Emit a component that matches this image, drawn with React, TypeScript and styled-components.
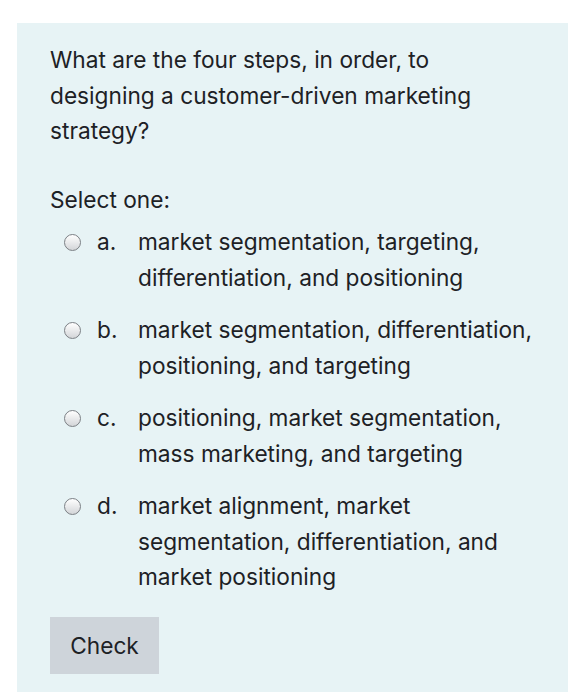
import React from 'react';
import styled, { createGlobalStyle } from 'styled-components';

const GlobalStyle = createGlobalStyle`
  html, body {
    margin: 0;
    padding: 0;
    background: #ffffff;
  }
  body {
    font-family: Inter, "Liberation Sans", sans-serif;
    color: #1d2125;
  }
`;

const Page = styled.div`
  padding: 23px 5px 6px 17px;
`;

const Panel = styled.div`
  background-color: #e7f3f5;
  padding: 19px 28px 18px 33px;
  font-size: 22.7px;
  line-height: 35.5px;
`;

const Question = styled.div`
  margin-bottom: 33.5px;
`;

const Prompt = styled.div`
  margin-bottom: 6.5px;
`;

const Answers = styled.div`
  display: flex;
  flex-direction: column;
  gap: 17px;
  padding-left: 13.5px;
`;

const Option = styled.label`
  display: flex;
  align-items: flex-start;
`;

const Radio = styled.span`
  flex: none;
  width: 17px;
  height: 17px;
  margin-top: 9.5px;
  margin-right: 16.5px;
  border-radius: 50%;
  box-sizing: border-box;
  border: 1px solid #7c8085;
  background: linear-gradient(#ffffff, #d3d5d8);
`;

const Letter = styled.span`
  flex: none;
  width: 41px;
`;

const Text = styled.span`
  flex: 1;
`;

const CheckButton = styled.button`
  margin-top: 22.5px;
  width: 109px;
  height: 57px;
  border: none;
  border-radius: 0;
  background-color: #ced4da;
  color: #1d2125;
  font-family: inherit;
  font-size: 22.7px;
  padding: 0;
`;

const options = [
  { letter: 'a.', text: 'market segmentation, targeting, differentiation, and positioning' },
  { letter: 'b.', text: 'market segmentation, differentiation, positioning, and targeting' },
  { letter: 'c.', text: 'positioning, market segmentation, mass marketing, and targeting' },
  { letter: 'd.', text: 'market alignment, market segmentation, differentiation, and market positioning' },
];

export default function App() {
  return (
    <>
      <GlobalStyle />
      <Page>
        <Panel>
          <Question>
            What are the four steps, in order, to designing a customer-driven marketing strategy?
          </Question>
          <Prompt>Select one:</Prompt>
          <Answers>
            {options.map(o => (
              <Option key={o.letter}>
                <Radio />
                <Letter>{o.letter}</Letter>
                <Text>{o.text}</Text>
              </Option>
            ))}
          </Answers>
          <CheckButton>Check</CheckButton>
        </Panel>
      </Page>
    </>
  );
}
